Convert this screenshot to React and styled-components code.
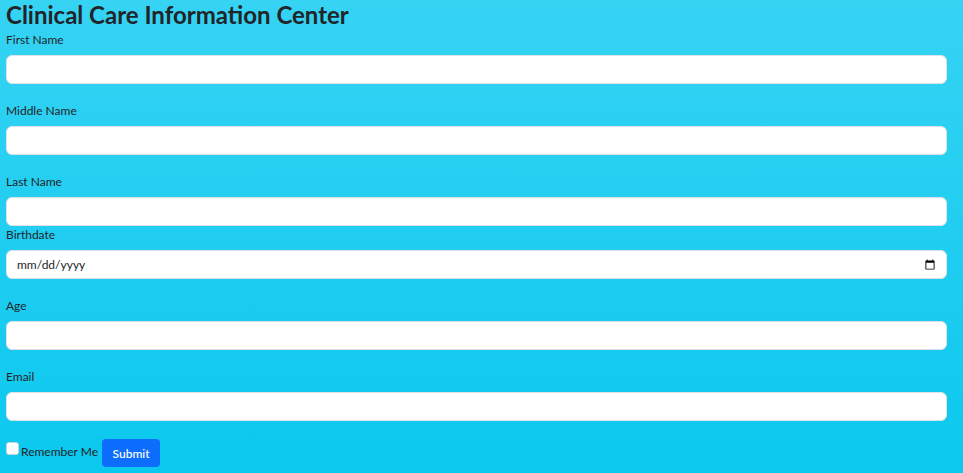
import React from "react";
import styled, { createGlobalStyle } from "styled-components";

const Global = createGlobalStyle`
  html, body { margin: 0; padding: 0; }
  body {
    font-family: Lato, "Noto Sans", sans-serif;
    color: #212529;
    background: linear-gradient(to bottom, #36d3f3 0%, #0bc8ee 100%);
    min-height: 100vh;
  }
  * { box-sizing: border-box; }
`;

const Page = styled.main`
  padding: 0 16px 0 6px;
  min-height: 100vh;
`;

const Title = styled.h1`
  margin: 0 0 2px;
  font-size: 24px;
  line-height: 29px;
  font-weight: 700;
  color: #212529;
`;

const Group = styled.div`
  margin-bottom: ${(p) => (p.$tight ? "0" : "18px")};
`;

const Label = styled.label`
  display: block;
  font-size: 12px;
  line-height: 18px;
  margin-bottom: 6px;
  color: #212529;
`;

const Input = styled.input`
  display: block;
  width: 100%;
  height: 29px;
  padding: 0 8px 0 10px;
  font-family: inherit;
  font-size: 12px;
  color: #212529;
  background: #fff;
  border: 1px solid #dee2e6;
  border-radius: 6px;
  outline: none;

  &::-webkit-datetime-edit-text,
  &::-webkit-datetime-edit-month-field,
  &::-webkit-datetime-edit-day-field,
  &::-webkit-datetime-edit-year-field {
    padding: 0;
    color: #212529;
  }
`;

const Row = styled.div`
  display: flex;
  align-items: flex-start;
`;

const Check = styled.input`
  appearance: none;
  -webkit-appearance: none;
  width: 13px;
  height: 13px;
  margin: 3px 2px 0 0;
  background: #fff;
  border: 1px solid #c9d3d8;
  border-radius: 3px;
`;

const CheckLabel = styled.label`
  font-size: 12px;
  line-height: 18px;
  margin-top: 4px;
  margin-right: 4px;
`;

const Button = styled.button`
  height: 28px;
  width: 58px;
  padding: 0;
  border: none;
  border-radius: 4px;
  background: #0d6efd;
  color: #fff;
  font-family: inherit;
  font-size: 12px;
  font-weight: 500;
`;

const fields = [
  { id: "first", label: "First Name", type: "text" },
  { id: "middle", label: "Middle Name", type: "text" },
  { id: "last", label: "Last Name", type: "text", tight: true },
  { id: "birth", label: "Birthdate", type: "date" },
  { id: "age", label: "Age", type: "text" },
  { id: "email", label: "Email", type: "email" },
];

export default function App() {
  return (
    <>
      <Global />
      <Page>
        <Title>Clinical Care Information Center</Title>
        <form onSubmit={(e) => e.preventDefault()}>
          {fields.map((f) => (
            <Group key={f.id} $tight={f.tight}>
              <Label htmlFor={f.id}>{f.label}</Label>
              <Input id={f.id} type={f.type} />
            </Group>
          ))}
          <Row>
            <Check type="checkbox" id="remember" />
            <CheckLabel htmlFor="remember">Remember Me</CheckLabel>
            <Button type="submit">Submit</Button>
          </Row>
        </form>
      </Page>
    </>
  );
}
